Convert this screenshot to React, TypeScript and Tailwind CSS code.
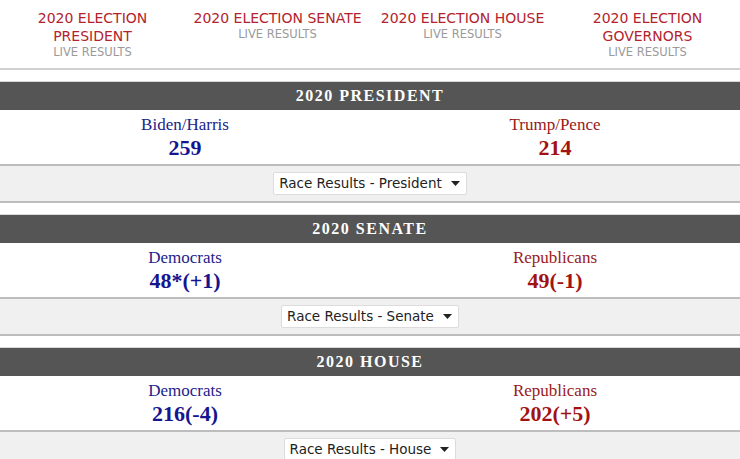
import React from 'react';

const navItems = [
  { lines: ['2020 ELECTION', 'PRESIDENT'] },
  { lines: ['2020 ELECTION SENATE'] },
  { lines: ['2020 ELECTION HOUSE'] },
  { lines: ['2020 ELECTION', 'GOVERNORS'] },
];

const races = [
  {
    title: '2020 PRESIDENT',
    dem: 'Biden/Harris',
    demCount: '259',
    rep: 'Trump/Pence',
    repCount: '214',
    select: 'Race Results - President',
  },
  {
    title: '2020 SENATE',
    dem: 'Democrats',
    demCount: '48*(+1)',
    rep: 'Republicans',
    repCount: '49(-1)',
    select: 'Race Results - Senate',
  },
  {
    title: '2020 HOUSE',
    dem: 'Democrats',
    demCount: '216(-4)',
    rep: 'Republicans',
    repCount: '202(+5)',
    select: 'Race Results - House',
  },
];

const sans = { fontFamily: '"DejaVu Sans", Verdana, sans-serif' };
const serif = { fontFamily: '"Liberation Serif", "Times New Roman", serif' };

function RaceBlock({ race }: { race: (typeof races)[number] }) {
  return (
    <div className="mt-[11px] border-t border-[#d8d8d8]">
      <div
        className="h-[28px] bg-[#555555] text-white font-bold text-[16px] tracking-[1.5px] flex items-center justify-center"
        style={serif}
      >
        {race.title}
      </div>
      <div className="h-[54px] grid grid-cols-2 pt-[5px] bg-white" style={serif}>
        <div className="flex flex-col items-center">
          <div className="text-[17px] leading-[20px] text-[#22228a]">{race.dem}</div>
          <div className="text-[22px] leading-[25px] font-bold text-[#15158f]">{race.demCount}</div>
        </div>
        <div className="flex flex-col items-center">
          <div className="text-[17px] leading-[20px] text-[#9a1a1a]">{race.rep}</div>
          <div className="text-[22px] leading-[25px] font-bold text-[#a31212]">{race.repCount}</div>
        </div>
      </div>
      <div className="h-[39px] bg-[#f0f0f0] border-y-2 border-[#bdbdbd] flex items-center justify-center">
        <div
          className="h-[23px] bg-white border border-[#dcdcdc] rounded-[2px] pl-[5px] pr-[6px] flex items-center gap-[9px] text-[13.5px] text-[#222]"
          style={sans}
        >
          <span>{race.select}</span>
          <svg width="9" height="5" viewBox="0 0 9 5">
            <path d="M0 0h9L4.5 5z" fill="#222" />
          </svg>
        </div>
      </div>
    </div>
  );
}

export default function App() {
  return (
    <div className="w-[740px] bg-white overflow-hidden">
      <div className="h-[70px] grid grid-cols-4 pt-[9px] border-b-2 border-[#d0d0d0]" style={sans}>
        {navItems.map((item, i) => (
          <div key={i} className="flex flex-col items-center text-center">
            {item.lines.map((l) => (
              <div key={l} className="text-[14px] leading-[18px] text-[#b3232d] whitespace-nowrap">
                {l}
              </div>
            ))}
            <div className="text-[11.5px] leading-[14px] text-[#9a9a9a]">LIVE RESULTS</div>
          </div>
        ))}
      </div>
      {races.map((r) => (
        <RaceBlock key={r.title} race={r} />
      ))}
    </div>
  );
}
